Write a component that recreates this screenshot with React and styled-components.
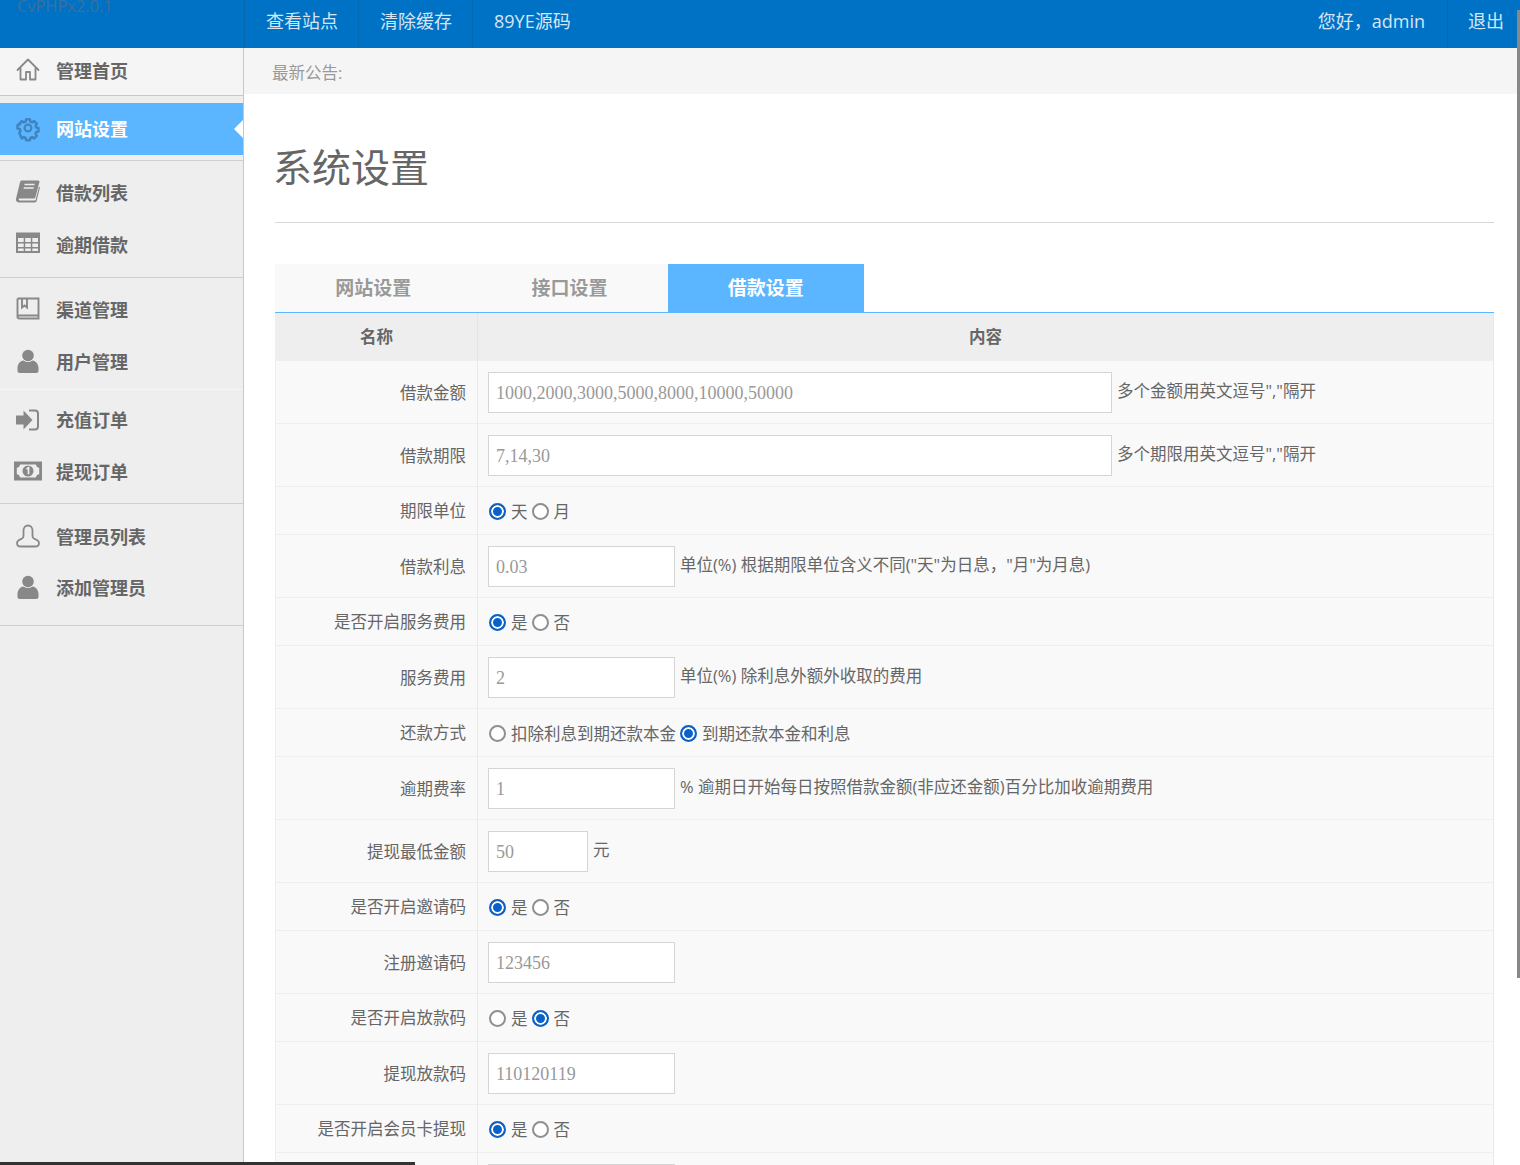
import styled, { createGlobalStyle } from "styled-components";

const cjk = `"Open Sans", "Noto Sans CJK SC", sans-serif`;

const GlobalStyle = createGlobalStyle`
  html, body {
    margin: 0;
    padding: 0;
    height: 100%;
    overflow: hidden;
    background: #fff;
    font-family: ${cjk};
    color: #666;
  }
  * { box-sizing: border-box; }
`;

const Page = styled.div`
  height: 100vh;
  display: flex;
  flex-direction: column;
  overflow: hidden;
`;

const TopBar = styled.header`
  flex: 0 0 48px;
  display: flex;
  background: #0072c6;
  color: #d4e6f4;
  font-size: 18px;
`;

const Brand = styled.div`
  width: 244px;
  height: 12px;
  padding-left: 17px;
  overflow: hidden;
  font-size: 16.4px;
  line-height: 12px;
  color: #3f6f98;
`;

const TopLink = styled.a`
  height: 48px;
  padding: 0 ${(p) => p.$right || 20}px 8px ${(p) => p.$left || 21}px;
  display: flex;
  align-items: center;
  border-left: ${(p) => (p.$plain ? "none" : "1px solid #0867b0")};
`;

const Spacer = styled.div`
  flex: 1;
`;

const Body = styled.div`
  flex: 1;
  display: flex;
  min-height: 0;
`;

const Side = styled.nav`
  width: 244px;
  flex: none;
  background: #eee;
  border-right: 1px solid #c8c8c8;
`;

const Group = styled.div`
  padding: ${(p) => p.$pad || "7px 0 5px"};
  border-bottom: 1px solid ${(p) => p.$line || "#cfcfcf"};
`;

const HomeGroup = styled.div`
  height: 48px;
  background: #f5f5f5;
  border-bottom: 1px solid #c8c8c8;
`;

const NavItem = styled.a`
  position: relative;
  height: ${(p) => p.$h || 52}px;
  display: flex;
  align-items: center;
  padding: 0 0 3px 14px;
  font-size: 18px;
  font-weight: 700;
  color: ${(p) => (p.$active ? "#fff" : "#666")};
  background: ${(p) => (p.$active ? "#5cb5ff" : "transparent")};
  ${(p) =>
    p.$active &&
    `&::after {
      content: "";
      position: absolute;
      right: 0;
      top: 50%;
      margin-top: -9px;
      border: 9px solid transparent;
      border-left: 0;
      border-right: 9px solid #fff;
    }`}
`;

const IconBox = styled.span`
  width: 42px;
  height: 28px;
  flex: none;
  display: flex;
  align-items: center;
  color: ${(p) => p.$color || "#888"};
`;

const Main = styled.main`
  flex: 1;
  min-width: 0;
`;

const Notice = styled.div`
  height: 46px;
  background: #f5f5f5;
  padding-left: 28px;
  line-height: 50px;
  font-size: 16.5px;
  color: #999;
`;

const Content = styled.div`
  padding: 0 26px 0 31px;
`;

const Title = styled.h1`
  margin: 0;
  height: 129px;
  padding-top: 44px;
  font-size: 39px;
  line-height: 58px;
  font-weight: 400;
  text-indent: -2px;
  color: #666;
  border-bottom: 1px solid #d8d8d8;
`;

const Tabs = styled.div`
  margin-top: 41px;
  display: flex;
  border-bottom: 1px solid #5cb5ff;
  height: 49px;
`;

const Tab = styled.a`
  width: 196.33px;
  height: 48px;
  padding-bottom: 3px;
  display: flex;
  align-items: center;
  justify-content: center;
  font-size: 19px;
  font-weight: 700;
  color: ${(p) => (p.$active ? "#fff" : "#999")};
  background: ${(p) => (p.$active ? "#5cb5ff" : "#f9f9f9")};
`;

const Row = styled.div`
  display: grid;
  grid-template-columns: 201px 1fr;
  height: ${(p) => p.$h}px;
  background: ${(p) => (p.$head ? "#eee" : "#f9f9f9")};
  border-left: 1px solid #eee;
  border-right: 1px solid #e8e8e8;
  border-bottom: 1px solid #eee;
`;

const NameCell = styled.div`
  display: flex;
  align-items: center;
  justify-content: flex-end;
  padding: 0 11px ${(p) => (p.$radio ? 2 : 0)}px 0;
  font-size: 16.5px;
  white-space: nowrap;
`;

const FieldCell = styled.div`
  display: flex;
  align-items: center;
  padding: ${(p) => (p.$radio ? 1 : 0)}px 0 0 10px;
  border-left: 1px solid #e8e8e8;
  font-size: 16.5px;
  white-space: nowrap;
`;

const HeadCell = styled.div`
  display: flex;
  align-items: center;
  justify-content: center;
  padding-bottom: 2px;
  font-size: 16.5px;
  font-weight: 700;
  border-left: ${(p) => (p.$divider ? "1px solid #e4e4e4" : "none")};
`;

const Field = styled.input`
  width: ${(p) => p.$w}px;
  height: 41px;
  flex: none;
  padding: 3px 7px 0;
  border: 1px solid #d5d5d5;
  background: #fff;
  color: #999;
  font-size: 18px;
  font-family: "Liberation Serif", "Noto Sans CJK SC", serif;
  outline: none;
`;

const Hint = styled.span`
  margin: -5px 0 0 5px;
`;

const RadioLabel = styled.label`
  display: flex;
  align-items: center;
  margin-right: 3px;
`;

const Radio = styled.input.attrs({ type: "radio" })`
  appearance: none;
  width: 17px;
  height: 17px;
  margin: 1px 5px 0 1px;
  border-radius: 50%;
  border: 2px solid ${(p) => (p.checked ? "#0a62c9" : "#8f8f8f")};
  background: ${(p) => (p.checked ? "#0a62c9" : "#fff")};
  box-shadow: ${(p) => (p.checked ? "inset 0 0 0 2px #fff" : "none")};
`;

const VScroll = styled.div`
  position: fixed;
  top: 10px;
  right: 0;
  width: 3px;
  height: 968px;
  background: #888;
`;

const HScroll = styled.div`
  position: fixed;
  left: 0;
  bottom: 0;
  width: 415px;
  height: 3px;
  background: #333;
`;

const Icon = ({ children }) => (
  <svg width="28" height="28" viewBox="0 0 28 28" fill="currentColor">
    {children}
  </svg>
);

const HomeIcon = () => (
  <Icon>
    <path d="M3.500 14 14 3.500 24.500 14M6.500 12v11.500h5.500v-7.500h4v7.500h5.500V12" fill="none" stroke="currentColor" strokeWidth="1.800" strokeLinejoin="round" strokeLinecap="round" />
  </Icon>
);

const GearIcon = () => (
  <Icon>
    <path d="M11.500 3h5l.7 3.200 2.300 1 2.800-1.700 3.400 3.500-1.700 2.700 1 2.300 3 .7v4.600l-3 .7-1 2.300 1.700 2.700-3.400 3.500-2.800-1.700-2.300 1-.7 3.200h-5l-.7-3.200-2.300-1-2.800 1.700L2.300 21.100l1.700-2.700-1-2.300-3-.7v-4.600l3-.7 1-2.300L2.300 9 5.700 5.500l2.800 1.700 2.300-1z" transform="translate(3.500 3) scale(.75)" fill="none" stroke="currentColor" strokeWidth="3.400" strokeLinejoin="round" />
    <circle cx="14" cy="14" r="3.400" fill="none" stroke="currentColor" strokeWidth="2.200" />
  </Icon>
);

const BookIcon = () => (
  <Icon>
    <path d="M8 2.500h16c1.200 0 1.700.8 1.400 1.800L21.500 19c-.3 1-1 1.500-2 1.500H6c-1 0-1.400.6-1.300 1 .1.500.5.900 1.200.9h14.600c.7 0 1-.4 1.200-1l3.300-12.700 1 .6-3.300 13.500c-.3 1-1 1.700-2 1.700H5.500c-2.500 0-4-1.500-3.500-3.700L6 4.200c.3-1 1-1.700 2-1.700z" />
    <path d="M10.500 6.500h10M9.700 10h10" stroke="#eee" strokeWidth="1.300" />
  </Icon>
);

const TableIcon = () => (
  <Icon>
    <path fillRule="evenodd" transform="translate(0 -1)" d="M2 3.500h24v20.500H2zM4 9v4h5.700V9zM11.200 9v4h5.600V9zM18.300 9v4H24V9zM4 14.500v3.500h5.700v-3.500zM11.200 14.500v3.500h5.600v-3.500zM18.300 14.500v3.500H24v-3.500zM4 19.500V22h5.700v-2.500zM11.200 19.500V22h5.600v-2.500zM18.300 19.500V22H24v-2.500z" />
  </Icon>
);

const LedgerIcon = () => (
  <Icon>
    <path d="M3.500 3.500h21v17h-19c-1.200 0-2 .6-2 1.500s.8 1.500 2 1.500h19V21M3.500 22V3.500M8 3.500v9l2.500-2 2.500 2v-9" fill="none" stroke="currentColor" strokeWidth="1.900" />
  </Icon>
);

const UserIcon = () => (
  <Icon>
    <circle cx="14" cy="8.500" r="5.800" />
    <path d="M3.500 21c0-4.500 3.500-7.500 6-7.500 1.500 1 3 1.500 4.500 1.500s3-.5 4.500-1.500c2.500 0 6 3 6 7.500v3c0 1.300-1 2-2.500 2H6c-1.500 0-2.500-.7-2.500-2z" />
  </Icon>
);

const SignInIcon = () => (
  <Icon>
    <path d="M2 10.500h7.500V5.500L18.500 15l-9 9.500v-5H2z" />
    <path d="M15 5.500h6c2 0 3 1.200 3 3v13c0 1.800-1 3-3 3h-6" fill="none" stroke="currentColor" strokeWidth="2" />
  </Icon>
);

const MoneyIcon = () => (
  <svg width="30" height="28" viewBox="0 0 30 28" fill="currentColor" style={{ marginLeft: -1 }}>
    <path fillRule="evenodd" d="M1 4.500h28v19H1zM7 7.500c0 1.800-1.500 3.200-3.200 3.200v6.600c1.700 0 3.200 1.400 3.200 3.200h16c0-1.800 1.500-3.200 3.200-3.200v-6.600C24.500 10.700 23 9.300 23 7.500z" />
    <circle cx="15" cy="14" r="5.500" />
    <path d="M13.500 12l2-1.200v6.500" fill="none" stroke="#eee" strokeWidth="1.700" />
  </svg>
);

const OutlineUserIcon = () => (
  <Icon>
    <path d="M9.500 14V8.500c0-3 2-5 4.500-5s4.500 2 4.500 5V14c0 1.500 1 2.500 2 2.800 2.500.8 4.500 2.200 4.500 4.400 0 2-1.800 3.300-4 3.300H7c-2.200 0-4-1.300-4-3.300 0-2.200 2-3.600 4.500-4.400 1-.3 2-1.300 2-2.800z" fill="none" stroke="currentColor" strokeWidth="1.800" />
  </Icon>
);

const RadioGroup = ({ name, options, value }) => (
  <>
    {options.map((o) => (
      <RadioLabel key={o}>
        <Radio name={name} checked={o === value} readOnly />
        {o}
      </RadioLabel>
    ))}
  </>
);

const yesNo = ["是", "否"];

const rows = [
  { label: "借款金额", input: "1000,2000,3000,5000,8000,10000,50000", w: 624, hint: '多个金额用英文逗号","隔开' },
  { label: "借款期限", input: "7,14,30", w: 624, hint: '多个期限用英文逗号","隔开' },
  { label: "期限单位", options: ["天", "月"], value: "天" },
  { label: "借款利息", input: "0.03", w: 187, hint: '单位(%) 根据期限单位含义不同("天"为日息，"月"为月息)' },
  { label: "是否开启服务费用", options: yesNo, value: "是" },
  { label: "服务费用", input: "2", w: 187, hint: "单位(%) 除利息外额外收取的费用" },
  { label: "还款方式", options: ["扣除利息到期还款本金", "到期还款本金和利息"], value: "到期还款本金和利息" },
  { label: "逾期费率", input: "1", w: 187, hint: "% 逾期日开始每日按照借款金额(非应还金额)百分比加收逾期费用" },
  { label: "提现最低金额", input: "50", w: 100, hint: "元" },
  { label: "是否开启邀请码", options: yesNo, value: "是" },
  { label: "注册邀请码", input: "123456", w: 187 },
  { label: "是否开启放款码", options: yesNo, value: "否" },
  { label: "提现放款码", input: "110120119", w: 187 },
  { label: "是否开启会员卡提现", options: yesNo, value: "是" },
  { label: "", input: "", w: 187 },
];

const App = () => {
  return (
    <Page>
      <GlobalStyle />
      <TopBar>
        <Brand>CvPHPx2.0.1</Brand>
        <TopLink>查看站点</TopLink>
        <TopLink>清除缓存</TopLink>
        <TopLink>89YE源码</TopLink>
        <Spacer />
        <TopLink $plain $right={22}>您好，admin</TopLink>
        <TopLink $left={20} $right={16}>退出</TopLink>
      </TopBar>
      <Body>
        <Side>
          <HomeGroup>
            <NavItem $h={47}>
              <IconBox><HomeIcon /></IconBox>管理首页
            </NavItem>
          </HomeGroup>
          <Group>
            <NavItem $active>
              <IconBox $color="#3f85c0"><GearIcon /></IconBox>网站设置
            </NavItem>
          </Group>
          <Group $pad="6px 0 6px">
            <NavItem><IconBox><BookIcon /></IconBox>借款列表</NavItem>
            <NavItem><IconBox><TableIcon /></IconBox>逾期借款</NavItem>
          </Group>
          <Group $pad="6px 0 1px" $line="#f6f6f6">
            <NavItem><IconBox><LedgerIcon /></IconBox>渠道管理</NavItem>
            <NavItem><IconBox><UserIcon /></IconBox>用户管理</NavItem>
          </Group>
          <Group $pad="4px 0 5px">
            <NavItem><IconBox><SignInIcon /></IconBox>充值订单</NavItem>
            <NavItem><IconBox><MoneyIcon /></IconBox>提现订单</NavItem>
          </Group>
          <Group $pad="7px 0 11px">
            <NavItem><IconBox><OutlineUserIcon /></IconBox>管理员列表</NavItem>
            <NavItem $h={51}><IconBox><UserIcon /></IconBox>添加管理员</NavItem>
          </Group>
        </Side>
        <Main>
          <Notice>最新公告:</Notice>
          <Content>
            <Title>系统设置</Title>
            <Tabs>
              <Tab>网站设置</Tab>
              <Tab>接口设置</Tab>
              <Tab $active>借款设置</Tab>
            </Tabs>
            <Row $head $h={48}>
              <HeadCell>名称</HeadCell>
              <HeadCell $divider>内容</HeadCell>
            </Row>
            {rows.map((r) => (
              <Row key={r.label} $h={r.options ? 48 : 63}>
                <NameCell $radio={!!r.options}>{r.label}</NameCell>
                <FieldCell $radio={!!r.options}>
                  {r.options ? (
                    <RadioGroup name={r.label} options={r.options} value={r.value} />
                  ) : (
                    <>
                      <Field $w={r.w} defaultValue={r.input} />
                      {r.hint && <Hint>{r.hint}</Hint>}
                    </>
                  )}
                </FieldCell>
              </Row>
            ))}
          </Content>
        </Main>
      </Body>
      <VScroll />
      <HScroll />
    </Page>
  );
};

export default App;
